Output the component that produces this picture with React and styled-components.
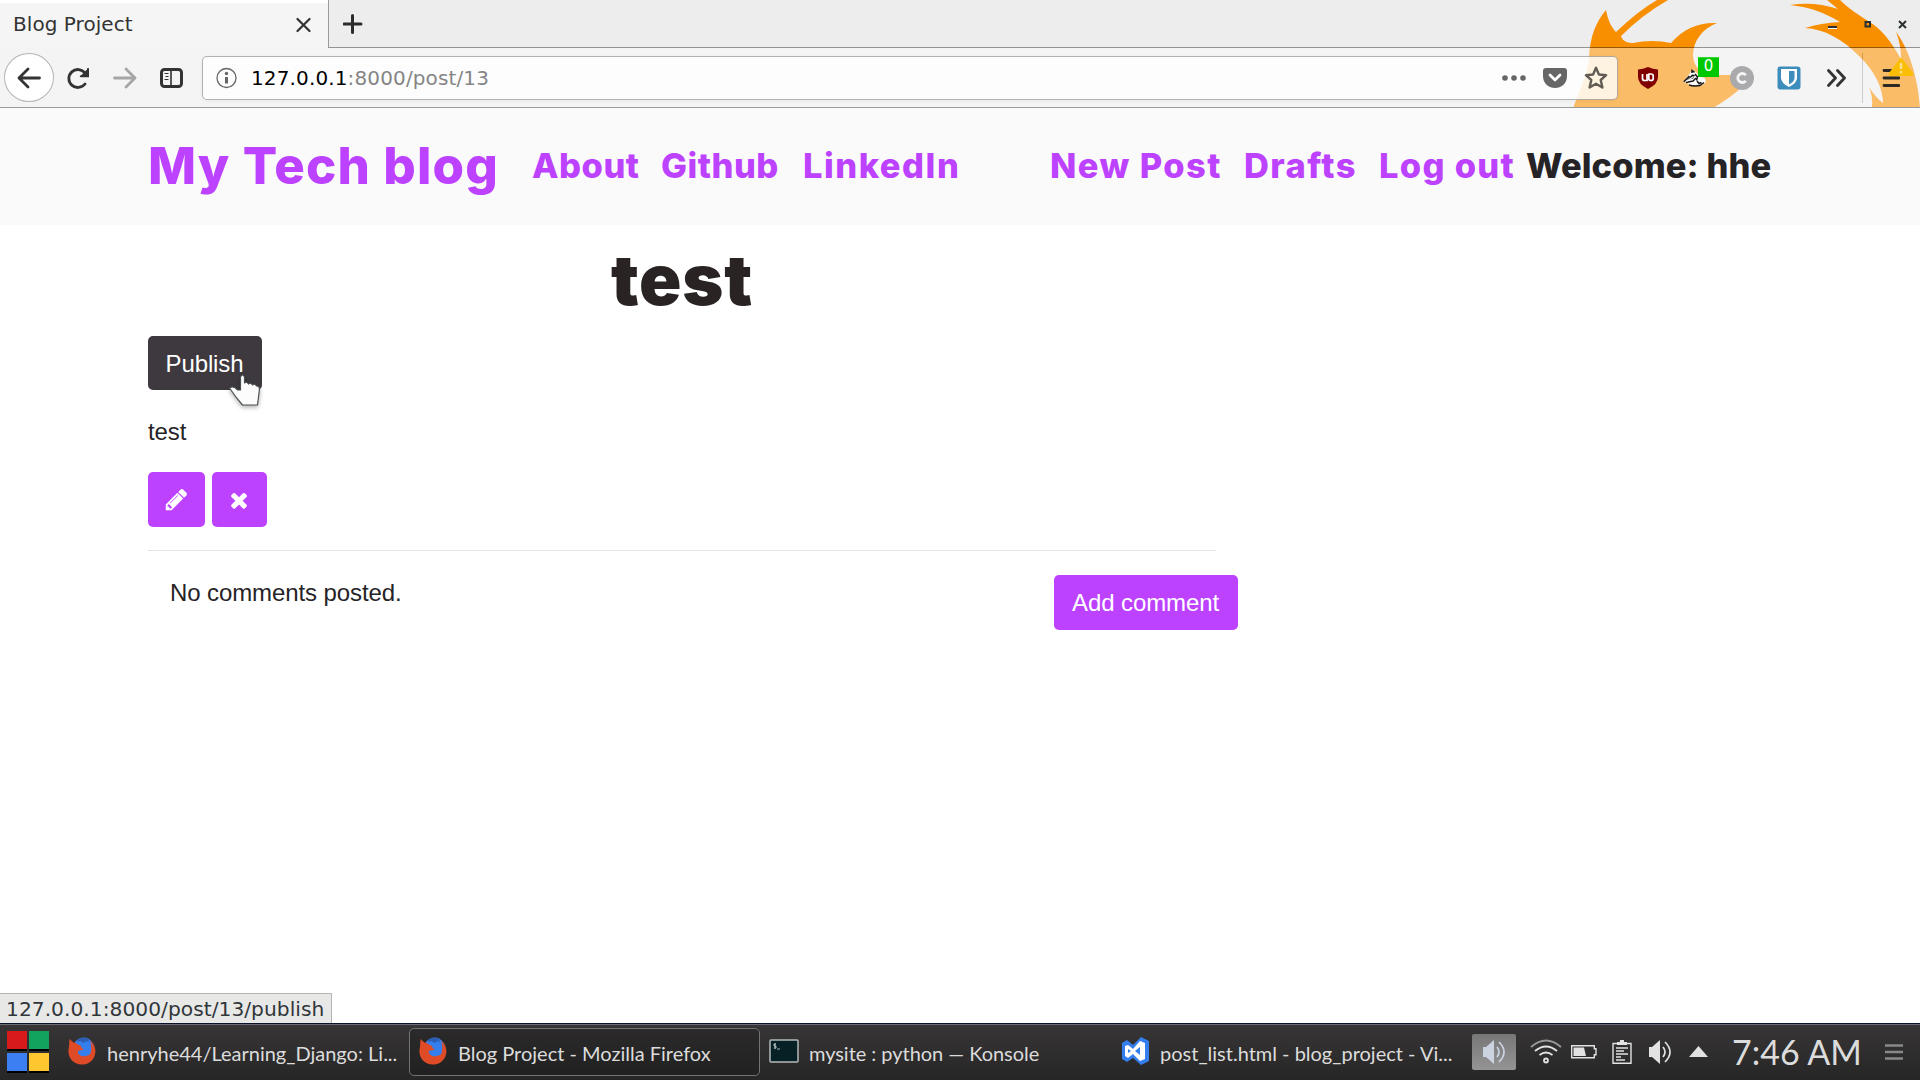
import React from "react";
import styled, { createGlobalStyle } from "styled-components";

const Global = createGlobalStyle`
  * { box-sizing: border-box; }
  body { margin: 0; background: #fff; overflow: hidden; }
`;

const ui = `"DejaVu Sans", sans-serif`;
const heading = `Inter, "DejaVu Sans", sans-serif`;
const body = `"Liberation Sans", Arial, sans-serif`;
const panel = `Lato, "Open Sans", sans-serif`;
const purple = "#bd42ff";

const Screen = styled.div`
  width: 1920px;
  height: 1080px;
  display: flex;
  flex-direction: column;
  overflow: hidden;
`;

/* browser chrome */
const Chrome = styled.header`
  position: relative;
  height: 108px;
  flex: none;
  background: #ededed;
  font-family: ${ui};
  font-size: 20px;
  color: #333;
`;
const ThemeArt = styled.svg`
  position: absolute;
  right: 0;
  top: 0;
`;
const TabStrip = styled.div`
  position: relative;
  display: flex;
  height: 48px;
`;
const Tab = styled.div`
  width: 328px;
  display: flex;
  align-items: center;
  justify-content: space-between;
  padding: 0 17px 1px 13px;
  background: #f5f5f5;
  border-top: 3px solid #fff;
`;
const TabTitle = styled.span`
  line-height: 24px;
  padding-bottom: 3px;
  letter-spacing: 0.05px;
`;
const StripRest = styled.div`
  flex: 1;
  display: flex;
  align-items: center;
  justify-content: space-between;
  padding: 0 13px 0 14px;
  border-left: 1px solid #999;
  border-bottom: 1px solid rgba(0, 0, 0, 0.38);
`;
const WindowButtons = styled.div`
  display: flex;
  gap: 26px;
  padding-top: 2px;
`;
const Toolbar = styled.div`
  position: relative;
  display: flex;
  align-items: center;
  height: 60px;
  padding-left: 4px;
  background: rgba(255, 255, 255, 0.4);
  border-bottom: 1px solid #999;
`;
const Slot = styled.div`
  position: relative;
  flex: none;
  display: flex;
  align-items: center;
  justify-content: center;
  width: ${(p) => p.$w}px;
  margin-left: ${(p) => p.$ml || 0}px;
`;
const BackCircle = styled.div`
  width: 50px;
  height: 49px;
  display: flex;
  align-items: center;
  justify-content: center;
  border: 1px solid #b4b4b4;
  border-radius: 50%;
  background: #fff;
`;
const UrlBar = styled.div`
  width: 1416px;
  height: 44px;
  margin-left: 6px;
  display: flex;
  align-items: center;
  padding: 0 9px 0 13px;
  border: 1px solid rgba(0, 0, 0, 0.3);
  border-radius: 5px;
  background: rgba(255, 255, 255, 0.8);
  box-shadow: 0 1px 4px rgba(0, 0, 0, 0.05);
`;
const Address = styled.span`
  flex: 1;
  margin-left: 13px;
  color: #858585;
  letter-spacing: 0.13px;
  b { font-weight: 400; color: #000; }
`;
const UrlActions = styled.div`
  display: flex;
  align-items: center;
  gap: 17px;
`;
const Counter = styled.span`
  position: absolute;
  left: 26px;
  top: -12px;
  width: 21px;
  height: 20px;
  background: #00c800;
  border-top: 1px solid #33d633;
  color: #fff;
  font-size: 15px;
  line-height: 17px;
  text-align: center;
`;
const Divider = styled.div`
  width: 1px;
  height: 50px;
  background: rgba(0, 0, 0, 0.16);
`;
const Warning = styled.svg`
  position: absolute;
  left: 24px;
  top: -11px;
`;

/* web page */
const Page = styled.main`
  position: relative;
  flex: 1;
  background: #fff;
  font-family: ${body};
  font-size: 24px;
  line-height: 36px;
  letter-spacing: -0.1px;
  color: #262326;
`;
const Nav = styled.nav`
  display: flex;
  align-items: flex-start;
  height: 117px;
  padding: 25px 0 0 148px;
  background: #fafafa;
  font-family: ${heading};
  font-weight: 800;
  line-height: 66px;
  white-space: nowrap;
`;
const Brand = styled.a`
  width: 384px;
  font-size: 51px;
  letter-spacing: 1.1px;
  color: ${purple};
`;
const NavLink = styled.a`
  width: ${(p) => p.$w}px;
  font-size: 34.5px;
  letter-spacing: ${(p) => p.$ls}px;
  color: ${(p) => (p.$dark ? "#262326" : purple)};
`;
const Post = styled.article`
  width: 1068px;
  margin-left: 148px;
`;
const Title = styled.h1`
  margin: 0;
  padding-top: 10px;
  font: 900 70px/90px ${heading};
  letter-spacing: 0.8px;
  text-align: center;
  color: #2a2323;
`;
const Button = styled.button`
  display: inline-flex;
  align-items: center;
  justify-content: center;
  width: ${(p) => p.$w}px;
  height: ${(p) => p.$h || 55}px;
  padding: ${(p) => (p.$dark ? "2px 1px 0 0" : "0 1px 0 0")};
  border: 0;
  border-radius: 5px;
  background: ${(p) => (p.$dark ? "#3e383f" : purple)};
  color: #fff;
  font: 24px/36px ${body};
  letter-spacing: -0.1px;
`;
const PublishRow = styled.div`
  position: relative;
  display: flex;
  margin-top: 11px;
`;
const Pointer = styled.svg`
  position: absolute;
  left: 80px;
  top: 36px;
  filter: drop-shadow(0 2px 2px rgba(0, 0, 0, 0.3));
`;
const Text = styled.p`
  margin: 24px 0 22px;
`;
const Actions = styled.div`
  display: flex;
  gap: 7px;
  padding-bottom: 23px;
  border-bottom: 1px solid #e4e4e4;
`;
const Comments = styled.section`
  display: flex;
  align-items: flex-start;
  justify-content: space-between;
  width: 1090px;
  padding: 24px 0 0 22px;
`;
const CommentText = styled.p`
  margin: 0;
`;
const StatusTip = styled.div`
  position: absolute;
  left: 0;
  bottom: 0;
  width: 332px;
  height: 31px;
  padding-left: 6px;
  background: #e8e8e7;
  border: 1px solid #b4b4b4;
  border-width: 1px 1px 0 0;
  font: 20.2px/31px ${ui};
  letter-spacing: 0.04px;
  color: #31363b;
`;

/* desktop panel */
const Panel = styled.footer`
  flex: none;
  display: flex;
  align-items: center;
  height: 56px;
  background: linear-gradient(#373536, #272626);
  border-top: 1px solid #6a6d76;
  box-shadow: 0 -1px 0 #0a1428;
  font-family: ${panel};
  color: #dcdcdc;
  z-index: 1;
`;
const Launcher = styled.div`
  display: grid;
  grid-template-columns: 20px 20px;
  gap: 2px;
  margin: 0 9px 2px 7px;
`;
const Tile = styled.div`
  height: 20px;
  background: ${(p) => p.$c};
  border-bottom: 2px solid #000;
`;
const Task = styled.div`
  width: 351px;
  height: 48px;
  display: flex;
  align-items: center;
  gap: ${(p) => p.$gap || 11}px;
  margin-bottom: 1px;
  padding: 0 0 2px ${(p) => p.$pl || 9}px;
  border: 1px solid ${(p) => (p.$active ? "#747474" : "transparent")};
  border-radius: 5px;
  background: ${(p) => (p.$active ? "rgba(20,20,20,.3)" : "none")};
  font-size: 20px;
  letter-spacing: ${(p) => p.$ls || 0}px;
  white-space: nowrap;
  span { padding-top: 3px; }
`;
const Mixer = styled.div`
  width: 44px;
  height: 36px;
  margin: 0 0 1px 10px;
  display: flex;
  align-items: center;
  justify-content: center;
  border-radius: 2px;
  background: linear-gradient(#777, #949494);
`;
const TrayIcon = styled.div`
  display: flex;
  margin: 0 0 2px ${(p) => p.$ml}px;
`;
const Clock = styled.div`
  width: 153px;
  margin: 0 0 1px 24px;
  font-size: 34px;
  line-height: 44px;
  white-space: nowrap;
`;

const Firefox = () => (
  <svg width="28" height="28" viewBox="0 0 28 28">
    <path d="M1.500 2L6 6C10 2 19 0 24 5c6 7 4 19-6 22C7 30-2 21 1 10z" fill="#df4b27" />
    <path d="M7 5C12-1 21-1 24 6c2 7 0 12-6 13-5 1-9-2-8-5l6-1.500c-2-1-3-2-3-3.500l-4-2z" fill="#347eed" />
    <path d="M22 4q5 6 2 14l-3 2q4-8 1-16z" fill="#df4b27" />
    <path d="M10 1.500q5-2 10 .5l1 3-3-1-2 2-4-2-3 1z" fill="#294a88" opacity=".6" />
  </svg>
);
const Speaker = ({ c = "#e2e2e2" }) => (
  <svg width="24" height="26" viewBox="0 0 24 26" fill="none" stroke={c} strokeWidth="1.7">
    <path d="M1 8h3l8-7v24l-8-7H1z" fill={c} stroke="none" />
    <path d="M15 8q4 5 0 10M17 3q10 10 0 20" />
  </svg>
);

const Arrow = ({ c = "#333", flip }) => (
  <svg width="24" height="22" viewBox="0 0 24 22" fill="none" stroke={c} strokeWidth="2.8" strokeLinecap="round" strokeLinejoin="round">
    <path d={flip ? "M1.5 11H22M13 2l9 9-9 9" : "M22.5 11H2M11 2l-9 9 9 9"} />
  </svg>
);

export default function App() {
  return (
    <Screen>
      <Global />
      <Chrome>
        <ThemeArt width="350" height="108" viewBox="1570 0 350 108" fill="#f78f00">
          <path d="M1573 108C1581 88 1588 71 1589 58C1590 36 1596 22 1606 10C1608 20 1611 27 1616 32Q1638 11 1657 0H1668Q1642 15 1621 36C1623 42 1628 43 1633 43Q1652 39 1671 43C1684 28 1700 22 1717 23C1702 29 1693 41 1693 56C1694 69 1703 75 1718 75H1746C1748 84 1736 94 1713 108Z" />
          <path d="M1827 0H1840C1849 9 1859 15 1868 21C1882 29 1892 43 1901 59Q1901 44 1896 32C1909 49 1918 78 1920 108H1872Q1873 96 1869 87Q1875 97 1883 103C1883 89 1875 71 1860 57C1843 39 1824 29 1805 28Q1821 23 1840 22C1824 12 1808 7 1790 5Q1814 1 1838 9Z" />
        </ThemeArt>
        <TabStrip>
          <Tab>
            <TabTitle>Blog Project</TabTitle>
            <svg width="16" height="16" viewBox="0 0 16 16" stroke="#333" strokeWidth="2.2" strokeLinecap="round"><path d="M2.500 2l12 12M14.500 2l-12 12" /></svg>
          </Tab>
          <StripRest>
            <svg width="20" height="20" viewBox="0 0 20 20" stroke="#2b2b2b" strokeWidth="3" strokeLinecap="round"><path d="M9.500 1.500v17M1 10h17" /></svg>
            <WindowButtons>
              <svg width="9" height="9" viewBox="0 0 9 9"><path d="M0 8.500h9" stroke="#fff" /><path d="M0 7h9" stroke="#2b3033" strokeWidth="2" /></svg>
              <svg width="9" height="9" viewBox="0 0 9 9" fill="none"><rect x="2.500" y="2" width="4.500" height="4.500" stroke="#2b3033" strokeWidth="2" /></svg>
              <svg width="9" height="9" viewBox="0 0 9 9" stroke="#2b3033" strokeWidth="2"><path d="M1 1l7 7M8 1L1 8" /></svg>
            </WindowButtons>
          </StripRest>
        </TabStrip>
        <Toolbar>
          <Slot $w={50}><BackCircle><Arrow /></BackCircle></Slot>
          <Slot $w={48}>
            <svg width="24" height="22" viewBox="0 0 24 22" fill="none" stroke="#333" strokeWidth="2.8" strokeLinecap="round">
              <path d="M19 17A9 9 0 1 1 19 6" /><path d="M22.500 1v9h-9z" fill="#333" stroke="none" /><path d="M22 2v7.200h-7" strokeWidth="2" />
            </svg>
          </Slot>
          <Slot $w={45}><Arrow c="#a5a5a5" flip /></Slot>
          <Slot $w={49}>
            <svg width="24" height="20" viewBox="0 0 24 20" fill="none" stroke="#333" strokeWidth="3">
              <rect x="1.500" y="1.500" width="20" height="17" rx="3" /><path d="M11 2v16" strokeWidth="1.6" /><path d="M4.500 5.500h4M5.500 8.500h3M4.500 11.500h4" strokeWidth="1.2" />
            </svg>
          </Slot>
          <UrlBar>
            <svg width="22" height="22" viewBox="0 0 22 22" fill="none" stroke="#666">
              <circle cx="10.500" cy="11" r="9.500" strokeWidth="1.300" /><path d="M10.500 10v6.500" strokeWidth="3" /><circle cx="10.500" cy="6.500" r="1.700" fill="#666" stroke="none" />
            </svg>
            <Address><b>127.0.0.1</b>:8000/post/13</Address>
            <UrlActions>
              <svg width="24" height="8" viewBox="0 0 24 8" fill="#666"><circle cx="3" cy="4" r="2.800" /><circle cx="12" cy="4" r="2.800" /><circle cx="21" cy="4" r="2.800" /></svg>
              <svg width="24" height="22" viewBox="0 0 24 22"><path d="M3 1h18q3 0 3 3v5c0 16-24 16-24 0V4q0-3 3-3z" fill="#666" /><path d="M7 8l5 5 5-5" fill="none" stroke="#fff" strokeWidth="2.800" strokeLinecap="round" strokeLinejoin="round" /></svg>
              <svg width="24" height="24" viewBox="0 0 24 24" fill="none" stroke="#625c55" strokeWidth="2.400" strokeLinejoin="round"><path d="M12 1.800l2.900 6.700 7.200.7-5.400 4.800 1.700 7.500L12 17.700l-6.400 3.800L7.300 14 1.900 9.200l7.200-.7z" /></svg>
            </UrlActions>
          </UrlBar>
          <Slot $w={47} $ml={6}>
            <svg width="22" height="24" viewBox="0 0 22 24" fill="none">
              <path d="M11 1q5 2 10 2.500V11q0 7-10 12Q1 18 1 11V3.500Q6 3 11 1z" fill="#800000" />
              <path d="M5.500 8v4.500q0 2 2 2h2.500V8M11.200 8h2.800q2.200 0 2.200 2v2.500q0 2-2.200 2t-2.200-2V8" stroke="#fff" strokeWidth="1.700" />
            </svg>
          </Slot>
          <Slot $w={46} $ml={1}>
            <svg width="24" height="18" viewBox="0 0 24 18">
              <path d="M.8 12.500L6 6l3-4.500 3 1 4 4 6 3 .5 4-4.500 3H7l-2-2.500z" fill="#fff" stroke="#f3e6d8" />
              <path d="M.8 12.800L6.500 7M9 4V1.500l2.500 1.800M3 13.500l7-1.500 3-3M12 5l2.500 3-1 3.500M6 16q5 1.500 11 .5l4-3M14 12l2 2.500 2.500-1" fill="none" stroke="#171717" strokeWidth="1.500" />
              <path d="M3.500 11.500l5.500-6 3 .5-2 3.500z" fill="#171717" />
              <path d="M4 12l6.500-4.500" stroke="#fff" strokeWidth="1.200" />
            </svg>
            <Counter>0</Counter>
          </Slot>
          <Slot $w={48}>
            <svg width="24" height="24" viewBox="0 0 24 24" fill="none"><circle cx="12" cy="12" r="12" fill="#aaaaad" /><path d="M15.800 9.200a4.500 4.500 0 1 0 0 5.600" stroke="#f4f4f4" strokeWidth="2.800" /></svg>
          </Slot>
          <Slot $w={45}>
            <svg width="24" height="24" viewBox="0 0 24 24"><rect x=".5" y=".5" width="23" height="23" rx="3" fill="#3c8dbc" /><path d="M4 3h16v9q0 5-8 9-8-4-8-9z" fill="#fff" /><path d="M12 5h5.500v7q0 3.500-5.500 6.500z" fill="#3c8dbc" /></svg>
          </Slot>
          <Slot $w={51}>
            <svg width="20" height="20" viewBox="0 0 20 20" fill="none" stroke="#333" strokeWidth="2.800" strokeLinecap="round" strokeLinejoin="round"><path d="M1.500 2.500l7 7.500-7 7.500M10.500 2.500l7 7.500-7 7.500" /></svg>
          </Slot>
          <Divider />
          <Slot $w={56}>
            <svg width="18" height="20" viewBox="0 0 18 20" stroke="#2c2824" strokeWidth="2.800" strokeLinecap="round"><path d="M2 2.500h15M2 10h15M2 17.500h15" /></svg>
            <Warning width="28" height="20" viewBox="0 0 28 20"><path d="M12.500 2q1.500-2 3 0L26 16q1 3-2 3H4q-3 0-2-3z" fill="#fcbd06" /><path d="M14 6v6M14 14v2.500" stroke="#fbe18c" strokeWidth="2.400" /></Warning>
          </Slot>
        </Toolbar>
      </Chrome>

      <Page>
        <Nav>
          <Brand>My Tech blog</Brand>
          <NavLink $w={129} $ls={0.5}>About</NavLink>
          <NavLink $w={142} $ls={0.5}>Github</NavLink>
          <NavLink $w={247} $ls={1.5}>LinkedIn</NavLink>
          <NavLink $w={194} $ls={1.4}>New Post</NavLink>
          <NavLink $w={135} $ls={1.4}>Drafts</NavLink>
          <NavLink $w={147} $ls={1.3}>Log out</NavLink>
          <NavLink $w={250} $ls={0.1} $dark>Welcome: hhe</NavLink>
        </Nav>
        <Post>
          <Title>test</Title>
          <PublishRow>
            <Button $w={114} $h={54} $dark>Publish</Button>
            <Pointer width="34" height="36" viewBox="228 372 34 36">
              <path d="M240.500 377q2-4 4 0v6q2-2 4 1 2-2 4 1 2-2 4 1 3 0 3 3l-2 16h-15q-7-8-13-17 4-3 8 2h3z" fill="#fcfcfc" stroke="#49504f" strokeWidth="1.200" strokeLinejoin="round" />
            </Pointer>
          </PublishRow>
          <Text>test</Text>
          <Actions>
            <Button $w={57}>
              <svg width="25" height="25" viewBox="0 0 1792 1792" fill="#fff"><path d="M491 1536l91-91-235-235-91 91v107h128v128h107zm523-928q0-22-22-22-10 0-17 7l-542 542q-7 7-7 17 0 22 22 22 10 0 17-7l542-542q7-7 7-17zm-54-192l416 416-832 832h-416v-416zm683 96q0 53-37 90l-166 166-416-416 166-165q36-38 90-38 53 0 91 38l235 234q37 39 37 91z" /></svg>
            </Button>
            <Button $w={55}>
              <svg width="24" height="24" viewBox="0 0 1792 1792" fill="#fff"><path d="M1490 1322q0 40-28 68l-136 136q-28 28-68 28t-68-28l-294-294-294 294q-28 28-68 28t-68-28l-136-136q-28-28-28-68t28-68l294-294-294-294q-28-28-28-68t28-68l136-136q28-28 68-28t68 28l294 294 294-294q28-28 68-28t68 28l136 136q28 28 28 68t-28 68l-294 294 294 294q28 28 28 68z" /></svg>
            </Button>
          </Actions>
          <Comments>
            <CommentText>No comments posted.</CommentText>
            <Button $w={184}>Add comment</Button>
          </Comments>
        </Post>
        <StatusTip>127.0.0.1:8000/post/13/publish</StatusTip>
      </Page>

      <Panel>
        <Launcher>
          <Tile $c="#d71b1b" /><Tile $c="#12a35f" /><Tile $c="#3b7ff2" /><Tile $c="#ffc72f" />
        </Launcher>
        <Task><Firefox /><span>henryhe44/Learning_Django: Li...</span></Task>
        <Task $active><Firefox /><span>Blog Project - Mozilla Firefox</span></Task>
        <Task $gap={10} $pl={8} $ls={-0.04}>
          <svg width="30" height="24" viewBox="0 0 30 24"><rect x="1" y="1" width="28" height="22" rx="1" fill="#062126" stroke="#b5b9b9" strokeWidth="1.500" /><path d="M7 5H5v2h2v2H5M6 4v6M8 10h3" fill="none" stroke="#cfd6d6" strokeWidth=".8" /></svg>
          <span>mysite : python — Konsole</span>
        </Task>
        <Task>
          <svg width="28" height="28" viewBox="0 0 28 28"><path d="M1 6l5-3 6 5 8-8 8 4v20l-8 4-8-7-6 4-5-3v-7z" fill="#347eed" /><path d="M4 9l3-1 5 4 7-8 5 2v16l-5 2-7-7-5 4-3-2V9zm3 3v4l3-2zm12-2l-5 4 5 4z" fill="#fff" fillRule="evenodd" /></svg>
          <span>post_list.html - blog_project - Vi...</span>
        </Task>
        <Mixer><Speaker c="#cbd3e0" /></Mixer>
        <TrayIcon $ml={14}>
          <svg width="32" height="26" viewBox="0 0 32 26" fill="none" stroke="#e2e2e2" strokeWidth="1.800"><path d="M1 8Q16-5 31 8" stroke="#999" /><path d="M5 12q11-9 22 0M9.500 16q6.500-5 13 0" /><circle cx="16" cy="21.500" r="2" /></svg>
        </TrayIcon>
        <TrayIcon $ml={9}>
          <svg width="26" height="14" viewBox="0 0 26 14"><path d="M.7.7h22.600v3H25v6h-1.700v3H.7z" fill="none" stroke="#e2e2e2" strokeWidth="1.400" /><path d="M2.500 2.500H13l2 8.500H2.500z" fill="#e2e2e2" /></svg>
        </TrayIcon>
        <TrayIcon $ml={14}>
          <svg width="22" height="24" viewBox="0 0 22 24" fill="none" stroke="#e2e2e2" strokeWidth="1.400"><path d="M2 3.500h18v19.700H2z" /><path d="M6 5V2h3V0h4v2h3v3z" fill="#e2e2e2" stroke="none" /><path d="M5 8h12M5 11h8M5 14h12M5 17h5M5 20h9" /></svg>
        </TrayIcon>
        <TrayIcon $ml={15}><Speaker /></TrayIcon>
        <TrayIcon $ml={17}>
          <svg width="19" height="11" viewBox="0 0 19 11"><path d="M9.500 0L19 11H0z" fill="#e2e2e2" /></svg>
        </TrayIcon>
        <Clock>7:46 AM</Clock>
        <TrayIcon $ml={0}>
          <svg width="18" height="16" viewBox="0 0 18 16" stroke="#898989" strokeWidth="2.400"><path d="M0 1.500h18M0 8h18M0 14.500h18" /></svg>
        </TrayIcon>
      </Panel>
    </Screen>
  );
}
